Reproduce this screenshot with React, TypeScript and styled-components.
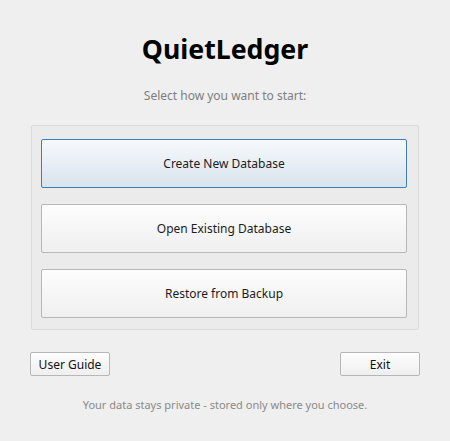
import React from "react";
import styled, { createGlobalStyle } from "styled-components";

const GlobalStyle = createGlobalStyle`
  html, body {
    margin: 0;
    padding: 0;
    background: #efefef;
  }
  body {
    font-family: "Noto Sans", "Open Sans", sans-serif;
  }
`;

const Window = styled.div`
  width: 450px;
  height: 441px;
  box-sizing: border-box;
  padding-top: 30px;
  display: flex;
  flex-direction: column;
  align-items: center;
  background: #efefef;
`;

const Title = styled.h1`
  margin: 0;
  font-size: 26.7px;
  line-height: 38px;
  font-weight: 700;
  color: #000;
`;

const Subtitle = styled.p`
  margin: 19px 0 0;
  font-size: 12px;
  line-height: 18px;
  color: #7e7e7e;
`;

const Frame = styled.div`
  margin-top: 20px;
  width: 388px;
  box-sizing: border-box;
  padding: 13px 11px 11px 9px;
  border: 1px solid #dadada;
  border-radius: 2px;
  background: #ebebeb;
  display: flex;
  flex-direction: column;
  gap: 16px;
`;

const ChoiceButton = styled.button<{ $primary?: boolean }>`
  height: 49px;
  width: 100%;
  font-family: inherit;
  font-size: 12px;
  color: #1c1c1c;
  border-radius: 2px;
  cursor: pointer;
  border: 1px solid ${(p) => (p.$primary ? "#3d7fb6" : "#b7b7b7")};
  background: ${(p) =>
    p.$primary
      ? "linear-gradient(#f6f9fc, #d9e3ec)"
      : "linear-gradient(#fdfdfd, #efefef)"};
`;

const BottomRow = styled.div`
  margin-top: 22px;
  width: 390px;
  display: flex;
  justify-content: space-between;
`;

const SmallButton = styled.button`
  width: 80px;
  height: 24px;
  padding: 0;
  font-family: inherit;
  font-size: 12px;
  color: #111;
  border: 1px solid #b7b7b7;
  border-radius: 2px;
  background: linear-gradient(#fdfdfd, #efefef);
  cursor: pointer;
`;

const Footer = styled.p`
  margin: 20px 0 0;
  font-size: 11px;
  line-height: 18px;
  color: #8a8a8a;
`;

export default function App() {
  return (
    <>
      <GlobalStyle />
      <Window>
        <Title>QuietLedger</Title>
        <Subtitle>Select how you want to start:</Subtitle>
        <Frame>
          <ChoiceButton $primary>Create New Database</ChoiceButton>
          <ChoiceButton>Open Existing Database</ChoiceButton>
          <ChoiceButton>Restore from Backup</ChoiceButton>
        </Frame>
        <BottomRow>
          <SmallButton>User Guide</SmallButton>
          <SmallButton>Exit</SmallButton>
        </BottomRow>
        <Footer>Your data stays private - stored only where you choose.</Footer>
      </Window>
    </>
  );
}
